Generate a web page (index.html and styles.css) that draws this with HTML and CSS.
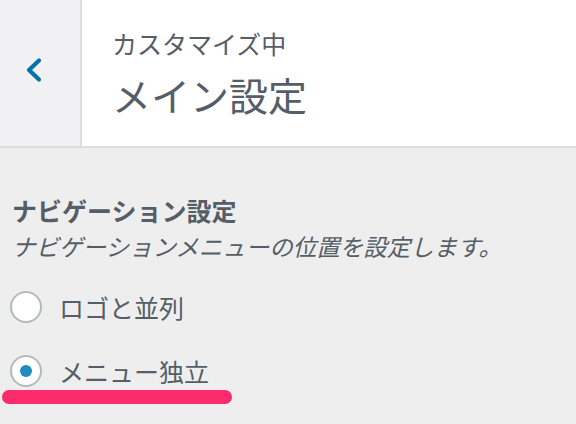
FILE: index.html
```html
<!DOCTYPE html>
<html lang="ja">
<head>
<meta charset="utf-8">
<link rel="stylesheet" href="styles.css">
</head>
<body>
<header class="head">
  <div class="back">
    <svg width="22" height="26" viewBox="0 0 22 26"><path d="M17 3.5 L7 13 L17 22.5" fill="none" stroke="#0073aa" stroke-width="4.2" stroke-linecap="round" stroke-linejoin="round"/></svg>
  </div>
  <div class="titles">
    <div class="sub">カスタマイズ中</div>
    <div class="main">メイン設定</div>
  </div>
</header>
<section class="section">
  <h2 class="heading">ナビゲーション設定</h2>
  <p class="desc">ナビゲーションメニューの位置を設定します。</p>
  <div class="options">
    <label class="opt"><span class="radio"></span><span class="lbl">ロゴと並列</span></label>
    <label class="opt"><span class="radio checked"></span><span class="lbl">メニュー独立</span></label>
  </div>
  <div class="marker"></div>
</section>
</body>
</html>
```

FILE: styles.css
```css
* { box-sizing: border-box; }
html, body { margin: 0; padding: 0; }
body {
  width: 576px;
  height: 424px;
  overflow: hidden;
  background: #eeeeee;
  font-family: "Noto Sans CJK JP", "Noto Sans", sans-serif;
  color: #555d66;
}
.head {
  display: flex;
  height: 148px;
  background: #fff;
  border-bottom: 2px solid #dddddd;
}
.back {
  width: 82px;
  background: #f1f1f3;
  border-right: 2px solid #dddddd;
  display: flex;
  align-items: center;
  justify-content: center;
  padding-right: 14px;
  padding-bottom: 6px;
}
.titles {
  padding: 26px 0 0 30px;
}
.sub {
  font-size: 25px;
  line-height: 34px;
}
.main {
  font-size: 39px;
  line-height: 50px;
  margin-top: 9px;
}
.section {
  padding: 44px 0 0 12px;
  position: relative;
}
.heading {
  margin: 0;
  font-size: 25px;
  font-weight: bold;
  line-height: 36px;
}
.desc {
  margin: 0;
  font-size: 23.5px;
  font-style: italic;
  line-height: 36px;
}
.options {
  display: flex;
  flex-direction: column;
  gap: 30px;
  margin-top: 26px;
  margin-left: -2px;
}
.opt {
  display: flex;
  align-items: center;
  gap: 17px;
  height: 34px;
}
.radio {
  width: 32px;
  height: 32px;
  border-radius: 50%;
  border: 2px solid #b4b9be;
  background: #fff;
  display: flex;
  align-items: center;
  justify-content: center;
}
.radio.checked::after {
  content: "";
  width: 12px;
  height: 12px;
  border-radius: 50%;
  background: #1e8cbe;
}
.lbl {
  font-size: 25px;
  line-height: 34px;
}
.marker {
  position: absolute;
  left: 2px;
  top: 242px;
  width: 230px;
  height: 14px;
  border-radius: 7px;
  background: #fc2c6c;
}
```
